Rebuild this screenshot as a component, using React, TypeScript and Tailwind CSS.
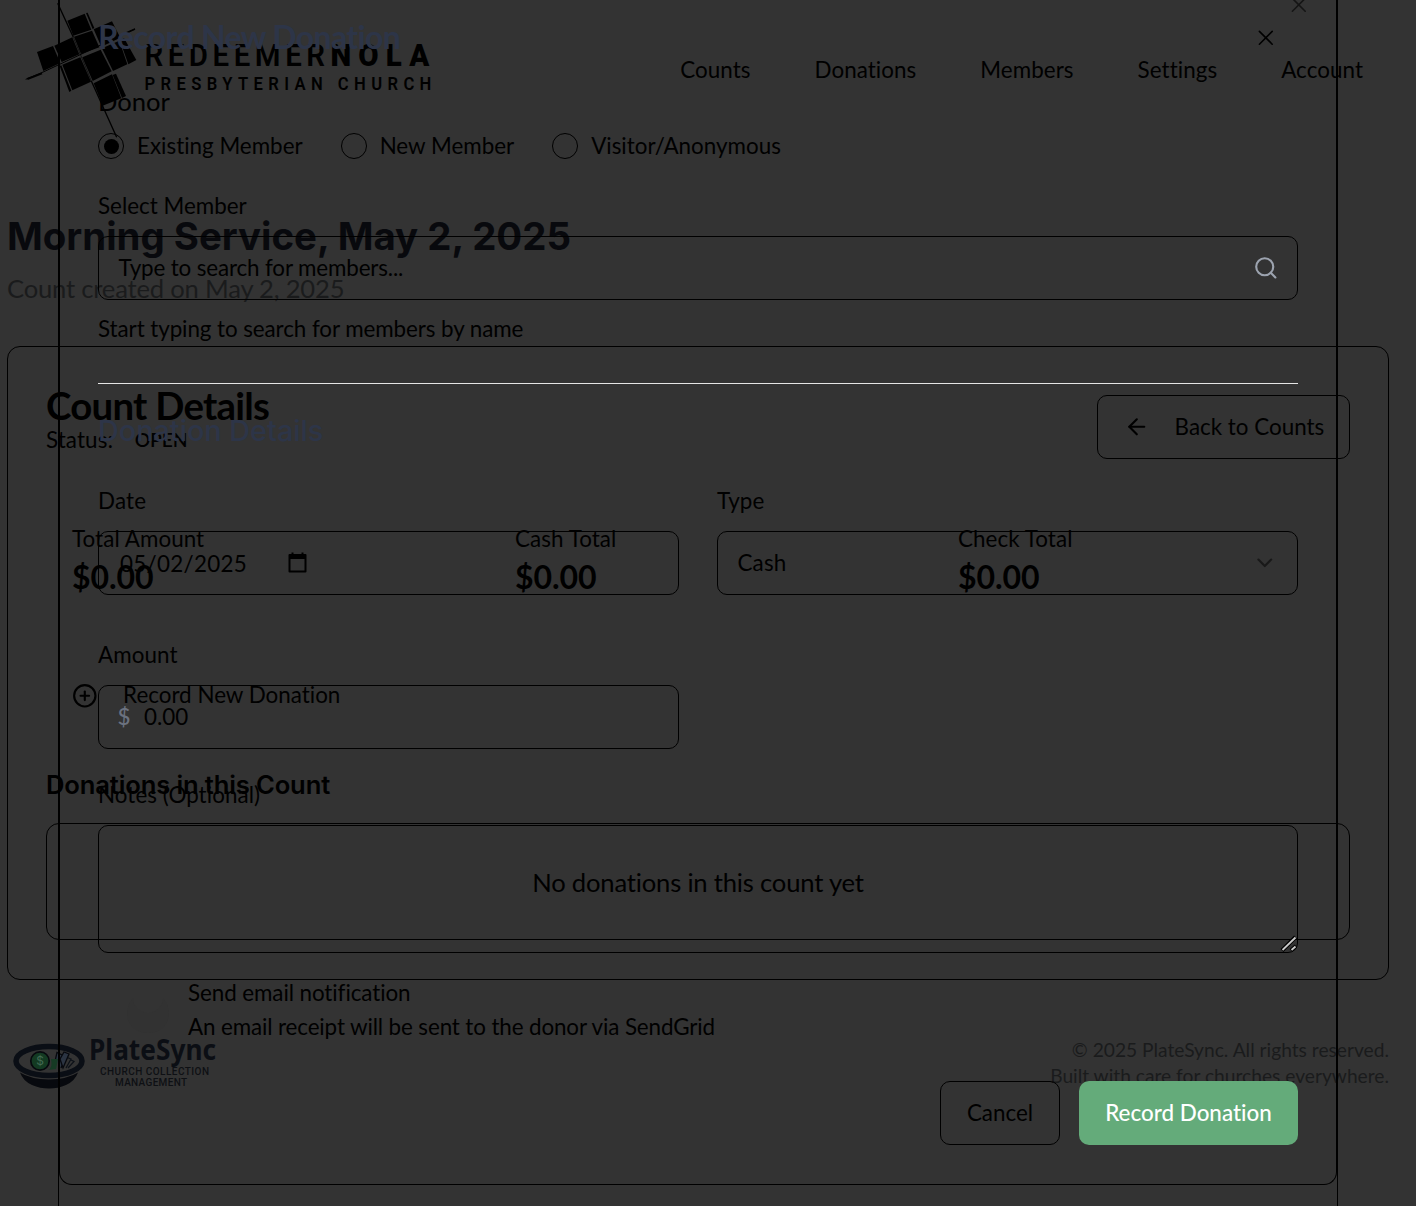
import React from "react";
import { ArrowLeft, CirclePlus, X, Search, ChevronDown } from "lucide-react";

function ChurchLogo() {
  return (
    <svg width="412" height="140" viewBox="20 0 412 140" className="block shrink-0" fill="#000">
      <g transform="translate(20 0) scale(0.33333)">
        <path d="M142 62 L194 41 L214 89 L160 107Z" />
        <path d="M198 39 L203 38 L223 84 L218 87Z" />
        <path d="M51 156 L99 138 L121 189 L70 213Z" />
        <path d="M103 137 L157 112 L178 163 L125 186Z" />
        <path d="M162 110 L216 92 L238 142 L183 162Z" />
        <path d="M221 88 L276 64 L301 113 L244 140Z" />
        <path d="M246 145 L298 122 L322 193 L279 213Z" />
        <path d="M300 122 L312 114 L349 180 L325 193Z" />
        <path d="M119 198 L124 196 L154 272 L148 276Z" />
        <path d="M127 194 L181 172 L213 245 L157 271Z" />
        <path d="M187 172 L242 149 L275 214 L218 243Z" />
        <path d="M221 250 L276 223 L304 295 L248 317Z" />
        <path d="M278 225 L288 221 L318 288 L306 294Z" />
        <path d="M17 238 L72 215 L345 87" stroke="#000" strokeWidth="3" fill="none" />
        <path d="M22 237 L66 220" stroke="#000" strokeWidth="6" />
        <path d="M320 98 L345 87" stroke="#000" strokeWidth="5" />
        <path d="M113 10 L160 112 M214 243 L290 412" stroke="#000" strokeWidth="4" fill="none" />
        <path d="M160 112 L214 243" stroke="#000" strokeWidth="2" fill="none" />
      </g>
      <g fontFamily="Roboto">
        <text transform="translate(144.5 66.2) scale(0.95 1)" fontSize="31" fontWeight="600" textLength="190" lengthAdjust="spacing">REDEEMER</text>
        <text transform="translate(330.5 66.2) scale(0.95 1)" fontSize="31" fontWeight="900" textLength="104" lengthAdjust="spacing">NOLA</text>
        <text transform="translate(144.5 89.7) scale(0.95 1)" fontSize="17.5" fontWeight="600" textLength="302" lengthAdjust="spacing">PRESBYTERIAN CHURCH</text>
      </g>
    </svg>
  );
}

function PlateLogo() {
  return (
    <svg width="212" height="56" viewBox="10 1036 212 56" className="relative -top-px block">
      <path d="M20 1072.5 Q30 1079 49 1079.500 Q68 1079 78 1072.5 Q75 1081 66 1085 Q58 1088.5 49 1088.5 Q40 1088.5 32 1085 Q23 1081 20 1072.5Z" fill="#07090e" />
      <ellipse cx="49" cy="1061" rx="33" ry="14.500" fill="none" stroke="#0a0e15" strokeWidth="5.5" />
      <path d="M66 1057 L71 1059 L66 1068 M70 1059.5 L74 1061.5 L68 1068" fill="none" stroke="#0d1219" strokeWidth="1.300" />
      <path d="M55.500 1059 L57 1052.5 L66 1057 L61 1068" fill="#2b3442" stroke="#07090e" strokeWidth="1.300" />
      <path d="M60 1059 L64 1052 L69 1054 L63 1068Z" fill="#2b3442" stroke="#07090e" strokeWidth="1.300" />
      <path d="M48 1070 Q53 1068 51 1059 L58 1059 L56 1069Z" fill="#163a24" />
      <circle cx="40" cy="1061" r="9.200" fill="#133a22" stroke="#07090e" strokeWidth="1.700" />
      <text x="40" y="1065.4" textAnchor="middle" fontFamily="Inter" fontSize="12" fill="#426b54">$</text>
      <text x="89" y="1059.5" fontFamily="Noto Sans" fontWeight="700" fontSize="28" fill="#0b0e14" textLength="127" lengthAdjust="spacingAndGlyphs">PlateSync</text>
      <text x="100" y="1074.600" fontFamily="Roboto" fontWeight="500" fontSize="10" fill="#0e1014" textLength="109" lengthAdjust="spacing">CHURCH COLLECTION</text>
      <text x="115" y="1085.800" fontFamily="Roboto" fontWeight="500" fontSize="10" fill="#0e1014" textLength="72" lengthAdjust="spacing">MANAGEMENT</text>
    </svg>
  );
}

function Stat({ label }: { label: string }) {
  return (
    <div className="w-[443px] shrink-0">
      <div className="leading-[28px] tracking-[0.06px]">{label}</div>
      <div className="text-[32px] leading-[48px] font-bold tracking-[-0.1px]">$0.00</div>
    </div>
  );
}

function Radio({ label, checked }: { label: string; checked?: boolean }) {
  return (
    <div className="flex h-[26px] items-center gap-[13px] whitespace-nowrap">
      <span className="flex size-[26px] items-center justify-center rounded-full border border-black">
        {checked && <span className="size-[15px] rounded-full bg-black" />}
      </span>
      {label}
    </div>
  );
}

function CountPage() {
  return (
    <div className="ml-[7px] w-[1382px]">
      <header className="flex h-[140px] justify-between pl-[13px]">
        <ChurchLogo />
        <nav className="flex h-[140px] items-center gap-[64px] pr-[26px] tracking-[0.06px]">
          <span>Counts</span>
          <span>Donations</span>
          <span>Members</span>
          <span>Settings</span>
          <span>Account</span>
        </nav>
      </header>
      <h1 className="mt-[73px] font-[Inter] text-[38.4px] leading-[46px] font-bold text-[#08090d]">Morning Service, May 2, 2025</h1>
      <p className="mt-[10px] text-[25.6px] leading-[38px] tracking-[-0.2px] text-[#1a1b1c]">Count created on May 2, 2025</p>
      <section className="mt-[39px] h-[634px] rounded-[13px] border border-black px-[38px] pt-[39px]">
        <div className="flex h-[73px] items-start justify-between">
          <div>
            <h2 className="text-[38.4px] leading-[38px] font-bold tracking-[-0.75px]">Count Details</h2>
            <div className="mt-[2px] flex leading-[28px]">
              <span className="tracking-[0.1px]">Status:</span>
              <span className="ml-[21.5px] text-[19.2px] font-semibold">OPEN</span>
            </div>
          </div>
          <button className="mt-[9px] flex h-[64px] w-[253px] items-center rounded-[10px] border border-black pl-[25.5px] whitespace-nowrap">
            <ArrowLeft size={25.6} strokeWidth={2} className="shrink-0" />
            <span className="ml-[25.5px]">Back to Counts</span>
          </button>
        </div>
        <div className="mt-[66px] flex pl-[26px]">
          <Stat label="Total Amount" />
          <Stat label="Cash Total" />
          <Stat label="Check Total" />
        </div>
        <div className="mt-[79px] flex h-[30px] items-center pl-[25.5px]">
          <CirclePlus size={25.6} strokeWidth={2} className="relative top-[0.5px]" />
          <span className="ml-[26px]">Record New Donation</span>
        </div>
        <h3 className="mt-[56px] font-[Inter] text-[25.6px] leading-[38px] font-semibold tracking-[-0.15px]">Donations in this Count</h3>
        <div className="mt-[19px] flex h-[117px] items-center justify-center rounded-[13px] border border-black pt-[2px] text-[25.6px] tracking-[-0.19px]">
          No donations in this count yet
        </div>
      </section>
      <footer className="mt-[57px] flex justify-between pl-[3px]">
        <PlateLogo />
        <div className="text-right text-[19.2px] leading-[26px] text-[#1a1b1c]">
          <div>© 2025 PlateSync. All rights reserved.</div>
          <div>Built with care for churches everywhere.</div>
        </div>
      </footer>
    </div>
  );
}

function DonationDialog() {
  return (
    <div className="absolute top-0 left-[58px] h-[1206px] w-[1280px] border-x border-black">
      <X className="absolute top-[-8px] left-[1226.5px] text-[#151515]" size={25.6} strokeWidth={1.5} />
      <div className="h-[1185px] w-[1278px] rounded-b-[13px] border border-t-0 border-black px-[38px] pt-[18px]">
        <div className="flex items-center justify-between pr-[19px]">
          <h2 className="text-[32px] leading-[38px] font-bold tracking-[-0.64px] text-[#2d3548]">Record New Donation</h2>
          <X size={25.6} strokeWidth={1.5} className="relative top-[0.5px]" />
        </div>
        <div className="mt-[29px] text-[25.6px] leading-[32px]">Donor</div>
        <div className="mt-[16px] flex gap-[38px]">
          <Radio label="Existing Member" checked />
          <Radio label="New Member" />
          <Radio label="Visitor/Anonymous" />
        </div>
        <div className="mt-[33px] leading-[28px]">Select Member</div>
        <div className="mt-[16px] flex h-[64px] items-center justify-between rounded-[10px] border border-black pr-[18.5px] pl-[19.5px]">
          <span className="tracking-[-0.14px]">Type to search for members...</span>
          <Search size={25.6} strokeWidth={2} className="text-[#9ca3af]" />
        </div>
        <div className="mt-[15px] leading-[28px] tracking-[-0.08px]">Start typing to search for members by name</div>
        <div className="mt-[40px] h-px bg-[#e5e5e5]" />
        <h3 className="mt-[28px] font-[Inter] text-[28.8px] leading-[38px] font-medium text-[#2d3548]">Donation Details</h3>
        <div className="mt-[37px] grid grid-cols-2 gap-x-[38px]">
          <div>
            <div className="leading-[28px] tracking-[0.2px]">Date</div>
            <div className="mt-[16px] flex h-[64px] items-center rounded-[10px] border border-black pl-[21px]">
              <span className="w-[166px] pt-[2px] tracking-[0.3px]">05/02/2025</span>
              <svg width="24" height="24" viewBox="0 0 24 24" fill="none" stroke="#000" strokeWidth="2">
                <path d="M3.500 4h16v16.500h-16z" strokeLinejoin="round" />
                <path d="M3.500 6h16" strokeWidth="4" />
                <path d="M6.500 1.500v3 M16.500 1.500v3" />
              </svg>
            </div>
          </div>
          <div>
            <div className="leading-[28px]">Type</div>
            <div className="mt-[16px] flex h-[64px] items-center justify-between rounded-[10px] border border-black px-[19.5px]">
              <span className="tracking-[0.15px]">Cash</span>
              <ChevronDown size={25.6} strokeWidth={2} className="text-[#191919]" />
            </div>
          </div>
          <div className="mt-[46px]">
            <div className="leading-[28px] tracking-[0.1px]">Amount</div>
            <div className="mt-[16px] flex h-[64px] items-center rounded-[10px] border border-black pl-[18.5px]">
              <span className="w-[26.5px] font-medium text-[#6b7280]">$</span>
              <span>0.00</span>
            </div>
          </div>
        </div>
        <div className="mt-[32px] leading-[28px] tracking-[0.06px]">Notes (Optional)</div>
        <div className="mt-[16px] flex h-[128px] items-end justify-end rounded-[10px] border border-black">
          <svg width="18" height="18" viewBox="0 0 18 18" fill="none">
            <path d="M3 16.500 L16.500 3 M12 16.500 L17 12" stroke="#000" strokeWidth="4" />
            <path d="M3.500 16 L16.500 3.500 M12.500 16 L16.500 12.500" stroke="#c8c8c8" strokeWidth="1.800" />
          </svg>
        </div>
        <div className="mt-[26px] flex">
          <div className="flex w-[90px] justify-end pt-[14px] pr-[19px]">
            <div className="flex h-[40px] w-[42px] justify-center rounded-full bg-[#323232]">
              <div className="h-[20px] w-[30px] rounded-b-full bg-[#333333]" />
            </div>
          </div>
          <div className="h-[62px]">
            <div className="leading-[28px] tracking-[-0.08px]">Send email notification</div>
            <div className="mt-[6px] leading-[28px] tracking-[-0.12px]">An email receipt will be sent to the donor via SendGrid</div>
          </div>
        </div>
        <div className="mt-[40px] flex justify-end gap-[19px]">
          <button className="h-[64px] w-[120px] rounded-[10px] border border-black">Cancel</button>
          <button className="h-[64px] w-[219px] rounded-[10px] bg-[#64ab7a] font-medium text-white">Record Donation</button>
        </div>
      </div>
    </div>
  );
}

export default function App() {
  return (
    <div className="relative h-[1206px] w-[1416px] overflow-hidden bg-[#333333] font-[Lato] text-[22.4px] text-black [font-feature-settings:'liga'_0]">
      <CountPage />
      <DonationDialog />
    </div>
  );
}
